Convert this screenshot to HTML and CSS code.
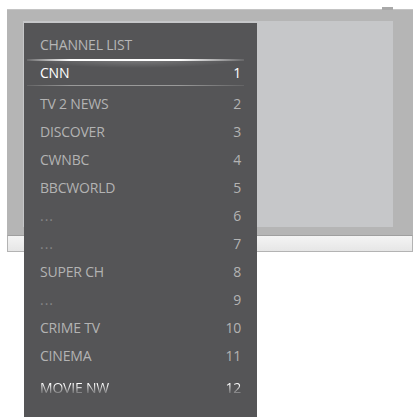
FILE: index.html
```html
<!DOCTYPE html>
<html lang="en">
<head>
    <meta charset="UTF-8">
    <meta name="viewport" content="width=device-width, initial-scale=1.0">
    <title>Channel List</title>
    <link rel="stylesheet" href="styles.css">
</head>
<body>
    <div class="tv">
        <div class="tv-tab"></div>
        <div class="tv-frame">
            <div class="tv-screen"></div>
        </div>
        <div class="tv-stand"></div>

        <div class="menu">
            <div class="menu-title">CHANNEL LIST</div>
            <div class="row selected"><span>CNN</span><span>1</span></div>
            <div class="row"><span>TV 2 NEWS</span><span>2</span></div>
            <div class="row"><span>DISCOVER</span><span>3</span></div>
            <div class="row"><span>CWNBC</span><span>4</span></div>
            <div class="row"><span>BBCWORLD</span><span>5</span></div>
            <div class="row empty"><span>...</span><span>6</span></div>
            <div class="row empty"><span>...</span><span>7</span></div>
            <div class="row"><span>SUPER CH</span><span>8</span></div>
            <div class="row empty"><span>...</span><span>9</span></div>
            <div class="row"><span>CRIME TV</span><span>10</span></div>
            <div class="row"><span>CINEMA</span><span>11</span></div>
            <div class="row fading"><span>MOVIE NW</span><span>12</span></div>
        </div>
    </div>
</body>
</html>
```

FILE: styles.css
```css
html, body {
    min-height: 418px;
}
body {
    margin: 0;
    background-color: #fff;
    font-family: 'Open Sans', 'Noto Sans', sans-serif;
}
.tv {
    position: relative;
    width: 406px;
    height: 409px;
    margin: 9px 0 0 7px;
}
.tv-tab {
    position: absolute;
    top: -2px;
    left: 375px;
    width: 11px;
    height: 3px;
    background-color: #a9a9a9;
}
.tv-frame {
    height: 226px;
    padding: 11px 20px 8px 16px;
    box-sizing: border-box;
    background-color: #b5b5b5;
    border-top: 1px solid #c4c4c4;
}
.tv-screen {
    height: 100%;
    background-color: #c6c7c9;
}
.tv-stand {
    height: 17px;
    box-sizing: border-box;
    border: 1px solid #b3b3b3;
    border-top-color: #9f9f9f;
    background: linear-gradient(#f4f4f4, #e6e6e6);
}
.menu {
    position: absolute;
    top: 14px;
    left: 17px;
    width: 233px;
    height: 394px;
    padding: 8px 16px 0;
    box-sizing: border-box;
    background-color: #555557;
}
.menu-title {
    height: 28px;
    line-height: 28px;
    font-size: 14px;
    letter-spacing: -0.2px;
    color: #b6b6b6;
}
.row {
    display: flex;
    justify-content: space-between;
    height: 28px;
    line-height: 28px;
    font-size: 14px;
    letter-spacing: -0.2px;
    color: #b3b3b3;
}
.row.empty span:first-child {
    color: #858587;
    letter-spacing: 1px;
}
.row.selected {
    position: relative;
    height: 27px;
    margin-bottom: 4px;
    line-height: 27px;
    color: #fff;
}
/* glowing rule above and thin rule below the active channel */
.row.selected::before,
.row.selected::after {
    content: "";
    position: absolute;
    left: -13px;
    right: -3px;
    height: 1px;
}
.row.selected::before {
    top: 0;
    height: 9px;
    background:
        linear-gradient(to right, rgba(255,255,255,0.1), #fff 20%, #fff 70%, rgba(255,255,255,0.1)) top / 100% 2px no-repeat,
        radial-gradient(ellipse at top, rgba(255,255,255,0.25), rgba(255,255,255,0) 70%);
}
.row.selected::after {
    bottom: 0;
    background: linear-gradient(to right, rgba(160,160,160,0.2), #9a9a9a 20%, #9a9a9a 70%, rgba(160,160,160,0.2));
}
/* last entry fades out toward the bottom of the list */
.row.fading {
    margin-top: 4px;
}
.row.fading span {
    background: linear-gradient(#fff 38%, rgba(255,255,255,0.15) 72%);
    -webkit-background-clip: text;
    background-clip: text;
    color: transparent;
}
```
